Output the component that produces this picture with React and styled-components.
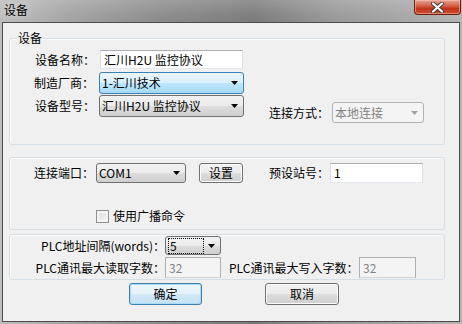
import React from 'react';
import styled, { createGlobalStyle, css } from 'styled-components';

const font = `"Noto Sans CJK SC", "Liberation Sans", sans-serif`;

const GlobalStyle = createGlobalStyle`
    html, body { margin: 0; padding: 0; }
    body { font-family: ${font}; font-size: 12px; color: #000; }
`

const Window = styled.div`
    width: 462px;
    height: 324px;
    display: flex;
    flex-direction: column;
    background: linear-gradient(90deg, #bdbdbd 0%, #a3a3a3 15%, #8a8a8a 35%, #7a7a7a 55%, #989898 72%, #a6a6a6 88%, #b4b4b4 100%);
    box-sizing: border-box;
`

const TitleBar = styled.div`
    height: 22px;
    display: flex;
    align-items: flex-start;
    justify-content: space-between;
    padding-left: 4px;
    padding-right: 1px;
    background: linear-gradient(180deg, rgba(255,255,255,0.18) 0%, rgba(255,255,255,0.05) 60%, rgba(0,0,0,0) 100%);
`

const Title = styled.span`
    font-size: 12px;
    line-height: 14px;
    margin-top: 3px;
    color: #000;
    text-shadow: 0 0 6px rgba(255,255,255,0.6);
`

const CloseButton = styled.div`
    width: 47px;
    height: 15px;
    box-sizing: border-box;
    border: 1px solid #6b1d12;
    border-top: none;
    border-radius: 0 0 4px 4px;
    background: linear-gradient(180deg, #e6a595 0%, #d4634a 40%, #c0361c 60%, #cc4a2c 100%);
    box-shadow: inset 0 0 0 1px rgba(255,200,190,0.5);
    display: flex;
    justify-content: center;
    align-items: center;
`

const Body = styled.div`
    flex: 1;
    margin: 0 2px 2px 2px;
    border: 1px solid #4c4c4c;
    background: #f0f0f0;
    padding: 0 14px 0 6px;
    display: flex;
    flex-direction: column;
`

const Group = styled.div`
    position: relative;
    box-sizing: border-box;
    height: ${p => p.h}px;
    margin-top: ${p => p.mt}px;
    border: 1px solid #d5dfe5;
    border-radius: 3px;
    box-shadow: inset 1px 1px 0 #fbfbfb;
`

const Legend = styled.span`
    position: absolute;
    top: -8px;
    left: 7px;
    padding: 0 1px;
    background: #f0f0f0;
    line-height: 14px;
`

const Row = styled.div`
    display: flex;
    align-items: center;
    margin-top: ${p => p.mt || 0}px;
    padding-left: ${p => p.pl || 0}px;
`

const Label = styled.span`
    width: ${p => p.w}px;
    flex: none;
    line-height: 14px;
    white-space: nowrap;
    text-align: ${p => p.right ? 'right' : 'left'};
`

const TextBox = styled.div`
    box-sizing: border-box;
    width: ${p => p.w}px;
    height: ${p => p.h}px;
    margin-left: ${p => p.ml || 0}px;
    border: 1px solid #e3e9ef;
    border-top-color: #abadb3;
    border-left-color: #dbdfe6;
    border-right-color: #dbdfe6;
    background: #fff;
    padding-left: 3px;
    display: flex;
    align-items: center;
    line-height: 14px;
    ${p => p.disabled && css`
        background: #f4f4f4;
        border-color: #afafaf;
        border-bottom-color: #d4d4d4;
        color: #838383;
    `}
`

const Combo = styled.div`
    box-sizing: border-box;
    width: ${p => p.w}px;
    height: ${p => p.h}px;
    border: 1px solid #707070;
    border-radius: 3px;
    background: linear-gradient(180deg, #f2f2f2 0%, #ebebeb 50%, #dddddd 51%, #cfcfcf 100%);
    display: flex;
    align-items: center;
    justify-content: space-between;
    padding: 0 5px 0 2px;
    line-height: 14px;
    ${p => p.hot && css`
        border-color: #3c7fb1;
        background: linear-gradient(180deg, #eaf6fd 0%, #d9f0fc 50%, #bee6fd 51%, #a7d9f5 100%);
    `}
    ${p => p.disabled && css`
        border-color: #adb2b5;
        background: #f4f4f4;
        color: #838383;
    `}
`

const ComboValue = styled.span`
    box-sizing: border-box;
    height: ${p => p.focus ? '16px' : 'auto'};
    width: ${p => p.focus ? '36px' : 'auto'};
    display: flex;
    align-items: center;
    padding-left: ${p => p.focus ? '1px' : '0'};
    border: ${p => p.focus ? '1px dotted #000' : 'none'};
`

const Arrow = ({ color = '#000' }) => (
    <svg width="7" height="4" viewBox="0 0 7 4"><path d="M0 0 H7 L3.5 4 Z" fill={color} /></svg>
)

const Button = styled.div`
    box-sizing: border-box;
    width: ${p => p.w}px;
    height: ${p => p.h}px;
    margin-left: ${p => p.ml || 0}px;
    border: 1px solid ${p => p.primary ? '#3c7fb1' : '#707070'};
    border-radius: 3px;
    background: ${p => p.primary
        ? 'linear-gradient(180deg, #eef7fc 0%, #e3f1fa 50%, #d2e9f7 51%, #c5e2f4 100%)'
        : 'linear-gradient(180deg, #f2f2f2 0%, #ebebeb 50%, #dddddd 51%, #cfcfcf 100%)'};
    box-shadow: inset 0 0 0 1px ${p => p.primary ? '#a9dbf6' : '#fcfcfc'};
    display: flex;
    align-items: center;
    justify-content: center;
    line-height: 14px;
`

const CheckBox = styled.div`
    box-sizing: border-box;
    width: 13px;
    height: 13px;
    border: 1px solid #8e8f8f;
    background: linear-gradient(135deg, #dcdcdc 0%, #f4f4f4 100%);
    box-shadow: inset 0 0 0 2px #f4f4f4;
`

const CheckRow = styled(Row)`
    gap: 4px;
`

const ButtonRow = styled(Row)`
    margin-top: 3px;
`

export default function App() {
    return (
        <Window>
            <GlobalStyle />
            <TitleBar>
                <Title>设备</Title>
                <CloseButton>
                    <svg width="13" height="11" viewBox="0 0 13 11">
                        <path d="M2 1.5 L11 9.5 M11 1.5 L2 9.5" stroke="#3a3a3a" strokeWidth="4" strokeLinecap="round" />
                        <path d="M2 1.5 L11 9.5 M11 1.5 L2 9.5" stroke="#fff" strokeWidth="2.2" strokeLinecap="round" />
                    </svg>
                </CloseButton>
            </TitleBar>
            <Body>
                <Group h={107} mt={15}>
                    <Legend>设备</Legend>
                    <Row mt={11} pl={25}>
                        <Label w={64}>设备名称：</Label>
                        <TextBox w={143} h={19} ml={1}>汇川H2U 监控协议</TextBox>
                    </Row>
                    <Row mt={3} pl={24}>
                        <Label w={65}>制造厂商：</Label>
                        <Combo w={145} h={22} hot>1-汇川技术<Arrow /></Combo>
                    </Row>
                    <Row mt={1} pl={25} style={{ alignItems: 'flex-start' }}>
                        <Label w={64} style={{ marginTop: 4 }}>设备型号：</Label>
                        <Combo w={145} h={22}>汇川H2U 监控协议<Arrow /></Combo>
                        <Row mt={7} pl={25}>
                            <Label w={63}>连接方式：</Label>
                            <Combo w={92} h={21} disabled>本地连接<Arrow color="#a0a0a0" /></Combo>
                        </Row>
                    </Row>
                </Group>
                <Group h={73} mt={12}>
                    <Row mt={5} pl={24}>
                        <Label w={62}>连接端口：</Label>
                        <Combo w={90} h={20}>COM1<Arrow /></Combo>
                        <Button w={44} h={20} ml={13}>设置</Button>
                        <Label w={61} style={{ marginLeft: 26 }}>预设站号：</Label>
                        <TextBox w={93} h={20}>1</TextBox>
                    </Row>
                    <CheckRow mt={26} pl={86}>
                        <CheckBox />
                        <Label>使用广播命令</Label>
                    </CheckRow>
                </Group>
                <Group h={46} mt={4}>
                    <Row mt={1}>
                        <Label w={155} right>PLC地址间隔(words)：</Label>
                        <Combo w={56} h={19}><ComboValue focus>5</ComboValue><Arrow /></Combo>
                    </Row>
                    <Row mt={2}>
                        <Label w={155} right>PLC通讯最大读取字数：</Label>
                        <TextBox w={56} h={21} disabled>32</TextBox>
                        <Label w={130} style={{ marginLeft: 8 }}>PLC通讯最大写入字数：</Label>
                        <TextBox w={57} h={21} disabled>32</TextBox>
                    </Row>
                </Group>
                <ButtonRow pl={120}>
                    <Button w={73} h={22} primary>确定</Button>
                    <Button w={74} h={22} ml={63}>取消</Button>
                </ButtonRow>
            </Body>
        </Window>
    );
}
